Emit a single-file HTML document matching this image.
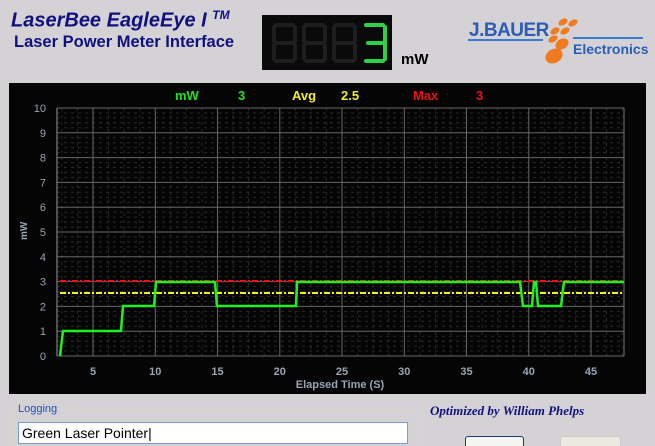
<!DOCTYPE html>
<html style="overflow:hidden"><head><meta charset="utf-8"><style>
html,body{margin:0;width:655px;height:446px;overflow:hidden}
body{background:#d4d2d4;font-family:"Liberation Sans",sans-serif;position:relative}
.a{position:absolute}
</style></head><body>
<div class="a" style="left:11px;top:8px;font-size:20px;font-weight:bold;font-style:italic;color:#101080">LaserBee EagleEye I <sup style="font-size:12px">TM</sup></div>
<div class="a" style="left:14px;top:33px;font-size:16.5px;font-weight:bold;color:#101080">Laser Power Meter Interface</div>
<div class="a" style="left:262px;top:15px;width:130px;height:55px;background:#0a0a0a"></div>
<svg class="a" style="left:262px;top:15px" width="130" height="55">
<g stroke-linecap="round" stroke-width="4" fill="none">
<g stroke="#1e1e1e"><path d="M14 10h17M12 12v14M33 12v14M14 28h17M12 30v14M33 30v14M14 46h17"/>
<path d="M44 10h17M42 12v14M63 12v14M44 28h17M42 30v14M63 30v14M44 46h17"/>
<path d="M74 10h17M72 12v14M93 12v14M74 28h17M72 30v14M93 30v14M74 46h17"/></g>
<path stroke="#2ed048" d="M104 10h17M123 12v14M106 28h17M123 30v14M104 46h17"/>
</g></svg>
<div class="a" style="left:401px;top:51px;font-size:15px;font-weight:bold;color:#000">mW</div>
<div class="a" style="left:469px;top:20px;font-size:19px;font-weight:bold;color:#2a5cb8;letter-spacing:-0.5px">J.BAUER</div>
<div class="a" style="left:468px;top:39px;width:75px;height:2px;background:#3a7ad0"></div>
<div class="a" style="left:573px;top:37px;width:70px;height:2px;background:#3a7ad0"></div>
<svg class="a" style="left:543px;top:14px" width="40" height="52"><g fill="#f07a20">
<ellipse cx="20" cy="8" rx="5" ry="3" transform="rotate(-30 20 8)"/><ellipse cx="30" cy="9" rx="5" ry="3" transform="rotate(-30 30 9)"/>
<ellipse cx="12" cy="17" rx="5" ry="3" transform="rotate(-30 12 17)"/><ellipse cx="22" cy="17" rx="5" ry="3" transform="rotate(-30 22 17)"/>
<ellipse cx="10" cy="25" rx="5" ry="3" transform="rotate(-30 10 25)"/><ellipse cx="19" cy="30" rx="7" ry="5" transform="rotate(-30 19 30)"/>
<ellipse cx="11" cy="42" rx="9" ry="7" transform="rotate(-30 11 42)"/></g></svg>
<div class="a" style="left:573px;top:41px;font-size:14px;font-weight:bold;color:#2a5cb8">Electronics</div>
<div class="a" style="left:9px;top:83px;width:637px;height:311px;background:#050505"></div>
<div class="a" style="top:88px;left:175px;font-size:13px;font-weight:bold;color:#20e020">mW</div>
<div class="a" style="top:88px;left:238px;font-size:13px;font-weight:bold;color:#20e020">3</div>
<div class="a" style="top:88px;left:292px;font-size:13px;font-weight:bold;color:#f0f020">Avg</div>
<div class="a" style="top:88px;left:341px;font-size:13px;font-weight:bold;color:#f0f020">2.5</div>
<div class="a" style="top:88px;left:413px;font-size:13px;font-weight:bold;color:#f01010">Max</div>
<div class="a" style="top:88px;left:476px;font-size:13px;font-weight:bold;color:#f01010">3</div>
<svg class="a" style="left:0;top:0" width="655" height="446" id="g"></svg>
<div class="a" style="left:10px;top:410px;width:410px;height:40px;border:1px solid #d8d8c8;border-radius:3px"></div>
<div class="a" style="left:16px;top:403px;font-size:11px;color:#2050c0;background:#d4d2d4;padding:0 2px">Logging</div>
<div class="a" style="left:18px;top:422px;background:#fff;border:1px solid #7a9cd0;font-size:14px;line-height:20px;padding-left:3px;box-sizing:border-box;width:390px;height:22px">Green Laser Pointer|</div>
<div class="a" style="left:430px;top:403px;font-size:13px;font-style:italic;font-family:'Liberation Serif',serif;color:#101080;font-weight:bold">Optimized by William Phelps</div>
<div class="a" style="left:465px;top:436px;width:57px;height:20px;border:1px solid #1a3a80;border-radius:3px;background:#f4f4f0"></div>
<div class="a" style="left:560px;top:436px;width:59px;height:20px;border:1px solid #ccc;border-radius:3px;background:#ece9e0"></div>
<script>
var s='',L=57,R=624,T=108,B=356;
function X(t){return 30.75+12.45*t}function Y(v){return B-24.8*v}
for(var v=0;v<10;v+=0.2){var y=Y(v).toFixed(1);if(Math.abs(v-Math.round(v))>0.01)s+='<line x1="'+L+'" x2="'+R+'" y1="'+y+'" y2="'+y+'" stroke="#2a2a2a" stroke-dasharray="3 4"/>';}
for(var t=2.5;t<47.6;t+=1.25){var x=X(t).toFixed(1);if(t%5)s+='<line x1="'+x+'" x2="'+x+'" y1="'+T+'" y2="'+B+'" stroke="#2a2a2a" stroke-dasharray="3 4"/>';}
for(var v=0;v<=10;v++){var y=Y(v).toFixed(1);s+='<line x1="'+L+'" x2="'+R+'" y1="'+y+'" y2="'+y+'" stroke="#666"/>';s+='<text x="46" y="'+(+y+4)+'" text-anchor="end" font-size="11" fill="#9aa4b4">'+v+'</text>';}
for(var t=5;t<=45;t+=5){var x=X(t).toFixed(1);s+='<line x1="'+x+'" x2="'+x+'" y1="'+T+'" y2="'+B+'" stroke="#666"/><text x="'+x+'" y="375" text-anchor="middle" font-size="11" font-weight="bold" fill="#9aa4b4">'+t+'</text>';}
s+='<line x1="'+L+'" x2="'+L+'" y1="'+T+'" y2="'+B+'" stroke="#999"/><line x1="'+R+'" x2="'+R+'" y1="'+T+'" y2="'+B+'" stroke="#777"/>';
s+='<text x="340" y="388" text-anchor="middle" font-size="11" font-weight="bold" fill="#9aa4b4">Elapsed Time (S)</text>';
s+='<text transform="translate(27,240) rotate(-90)" font-size="10" font-weight="bold" fill="#9aa4b4">mW</text>';
s+='<line x1="60" x2="'+R+'" y1="281" y2="281" stroke="#f01010" stroke-width="2" stroke-dasharray="6 2 2 2"/>';
s+='<line x1="60" x2="'+R+'" y1="293" y2="293" stroke="#f0f020" stroke-width="2" stroke-dasharray="6 2 2 2"/>';
s+='<polyline fill="none" stroke="#20f020" stroke-width="2.5" points="60,356 63,331 121,331 123,306 154,306 156,282 215,282 217,306 296,306 297,282 520,282 523,306 532,306 534,282 536,282 538,306 561,306 564,282 624,282"/>';
document.getElementById('g').innerHTML=s;
</script>
</body></html>
